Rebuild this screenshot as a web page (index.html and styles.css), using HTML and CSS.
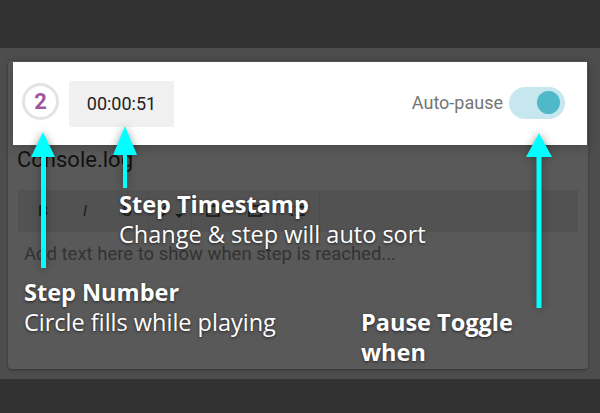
FILE: index.html
```html
<!DOCTYPE html>
<html>
<head>
<meta charset="utf-8">
<link rel="stylesheet" href="styles.css">
</head>
<body>
<div class="page">
  <div class="topbar"></div>
  <div class="main">
    <div class="card">
      <div class="step-row">
        <div class="step-num">2</div>
        <div class="stamp">00:00:51</div>
        <div class="spacer"></div>
        <div class="ap-label">Auto-pause</div>
        <div class="toggle"><div class="knob"></div></div>
      </div>
      <div class="title">Console.log</div>
      <div class="toolbar">
        <div class="tb-group">
          <span class="tb-btn tb-b">B</span>
          <span class="tb-btn tb-i">I</span>
          <span class="tb-btn tb-s">S</span>
        </div>
        <div class="tb-group">
          <span class="tb-btn">
            <svg width="14" height="14" viewBox="0 0 14 14"><path d="M6 8 L9 5 M5 6 L3 8 a2 2 0 0 0 3 3 l2-2 M9 8 l2-2 a2 2 0 0 0-3-3 L6 5" stroke="#1a1a1a" stroke-width="1.6" fill="none"/></svg>
            <span class="caret"></span>
          </span>
        </div>
        <div class="tb-group">
          <span class="tb-btn"><svg width="14" height="12" viewBox="0 0 14 12"><rect x="1" y="1" width="12" height="10" fill="none" stroke="#1a1a1a" stroke-width="1.6"/></svg></span>
          <span class="tb-btn"><svg width="14" height="12" viewBox="0 0 14 12"><rect x="1" y="1" width="12" height="10" fill="none" stroke="#1a1a1a" stroke-width="1.6"/></svg></span>
        </div>
        <div class="tb-group">
          <span class="tb-btn">
            <svg width="14" height="12" viewBox="0 0 14 12"><g fill="#1a1a1a"><rect x="0" y="1" width="2" height="1.6"/><rect x="0" y="5.2" width="2" height="1.6"/><rect x="0" y="9.4" width="2" height="1.6"/><rect x="4" y="1" width="10" height="1.6"/><rect x="4" y="5.2" width="10" height="1.6"/><rect x="4" y="9.4" width="10" height="1.6"/></g></svg>
          </span>
        </div>
      </div>
      <div class="placeholder">Add text here to show when step is reached...</div>
    </div>
  </div>
  <div class="footer"></div>

  <svg class="arrow arrow-num" width="30" height="140" viewBox="0 0 30 140"><polygon points="15,2 27,27 3,27" fill="#00ffff"/><rect x="13" y="26" width="5" height="112" fill="#00ffff"/></svg>
  <svg class="arrow arrow-time" width="30" height="66" viewBox="0 0 30 66"><polygon points="15,2 27,31 3,31" fill="#00ffff"/><rect x="13" y="30" width="4" height="34" fill="#00ffff"/></svg>
  <svg class="arrow arrow-pause" width="30" height="179" viewBox="0 0 30 179"><polygon points="15,2 28,26 2,26" fill="#00ffff"/><rect x="12.5" y="25" width="5" height="152" fill="#00ffff"/></svg>

  <div class="note note-time"><b>Step Timestamp</b><br>Change &amp; step will auto sort</div>
  <div class="note note-num"><b>Step Number</b><br>Circle fills while playing</div>
  <div class="note note-pause"><b>Pause Toggle<br>when</b></div>
</div>
</body>
</html>
```

FILE: styles.css
```css
html, body {
  margin: 0;
  padding: 0;
}
body {
  width: 600px;
  height: 413px;
  overflow: hidden;
  font-family: Roboto, "Liberation Sans", sans-serif;
  background: #4d4d4d;
}
.page {
  position: relative;
  width: 600px;
  height: 413px;
  display: flex;
  flex-direction: column;
}
.topbar {
  height: 48px;
  background: #323232;
  flex: none;
}
.main {
  flex: 1;
  padding: 13px 12px 10px 8px;
  display: flex;
  flex-direction: column;
}
.footer {
  height: 34px;
  background: #323232;
  flex: none;
}
.card {
  flex: 1;
  background: #595959;
  border-radius: 4px;
  box-shadow: 0 1px 3px rgba(0,0,0,0.35);
  padding: 1px 1px 0 0;
  display: flex;
  flex-direction: column;
}
.step-row {
  margin-left: 5px;
  height: 83px;
  background: #ffffff;
  display: flex;
  align-items: center;
  padding: 0 22px 0 9px;
  box-shadow: 0 2px 10px rgba(0,0,0,0.25);
}
.step-num {
  width: 31px;
  height: 31px;
  border: 3px solid #e3e3e3;
  border-radius: 50%;
  display: flex;
  align-items: center;
  justify-content: center;
  color: #a2559f;
  font-weight: 700;
  font-size: 22px;
  margin-top: -4px;
}
.stamp {
  margin-left: 10px;
  width: 105px;
  height: 46px;
  background: #f0f0f0;
  border-radius: 3px;
  display: flex;
  align-items: center;
  justify-content: center;
  font-size: 18px;
  color: #222;
}
.spacer {
  flex: 1;
}
.ap-label {
  color: #757575;
  font-size: 18px;
  margin-right: 6px;
  margin-top: -2px;
}
.toggle {
  width: 56px;
  height: 32px;
  border-radius: 16px;
  background: #c6e7ed;
  display: flex;
  align-items: center;
  justify-content: flex-end;
  padding-right: 5px;
  box-sizing: border-box;
  margin-top: -2px;
}
.knob {
  width: 23px;
  height: 23px;
  border-radius: 50%;
  background: #4fb9c9;
}
.title {
  margin: 2px 0 0 9px;
  font-size: 22px;
  line-height: 26px;
  color: #111111;
}
.toolbar {
  margin: 17px 9px 0 10px;
  height: 42px;
  background: #525252;
  display: flex;
  align-items: center;
  padding-left: 4px;
}
.tb-group {
  display: flex;
  align-items: center;
  height: 100%;
  border-right: 1px solid #4c4c4c;
}
.tb-btn {
  width: 42px;
  display: flex;
  align-items: center;
  justify-content: center;
  font-size: 15px;
  color: #1a1a1a;
  gap: 4px;
}
.tb-b { font-weight: 700; }
.tb-i { font-style: italic; }
.tb-s { text-decoration: line-through; }
.caret {
  width: 0;
  height: 0;
  border-left: 4px solid transparent;
  border-right: 4px solid transparent;
  border-top: 4px solid #1a1a1a;
  margin-top: 10px;
}
.placeholder {
  margin: 11px 0 0 16px;
  font-size: 18.5px;
  line-height: 22px;
  color: #333333;
}
.arrow {
  position: absolute;
  filter: drop-shadow(0 0 4px rgba(0,0,0,0.35));
}
.arrow-num { left: 28px; top: 130px; }
.arrow-time { left: 110px; top: 124px; }
.arrow-pause { left: 524px; top: 131px; }
.note {
  position: absolute;
  font-family: "Open Sans", "Noto Sans", sans-serif;
  font-size: 23.5px;
  line-height: 30px;
  color: #ffffff;
  text-shadow: 0 1px 3px rgba(0,0,0,0.6);
  white-space: nowrap;
}
.note b { font-weight: 700; }
.note-time { left: 119px; top: 189px; }
.note-num { left: 24px; top: 277px; }
.note-pause { left: 361px; top: 307px; }
```
